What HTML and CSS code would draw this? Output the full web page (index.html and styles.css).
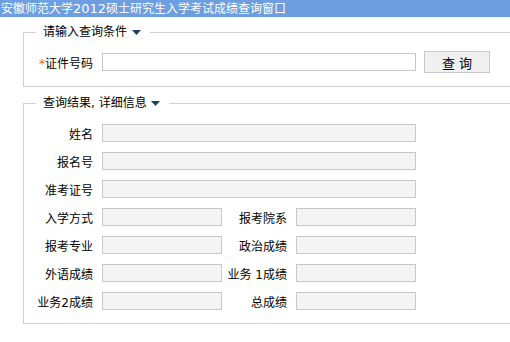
FILE: index.html
```html
<!DOCTYPE html>
<html lang="zh-CN">
<head>
    <meta charset="UTF-8">
    <title>安徽师范大学2012硕士研究生入学考试成绩查询窗口</title>
    <link rel="stylesheet" href="styles.css">
</head>
<body>
    <div class="title">安徽师范大学<span class="num">2012</span>硕士研究生入学考试成绩查询窗口</div>

    <div class="wrap">
        <fieldset class="query">
            <legend>请输入查询条件 <svg class="arrow" width="9" height="5" viewBox="0 0 9 5"><polygon points="0,0 9,0 4.5,5" /></svg></legend>
            <div class="row">
                <label class="lbl"><span class="req">*</span>证件号码</label>
                <input type="text" class="txt long white">
                <button class="btn">查 询</button>
            </div>
        </fieldset>

        <fieldset class="result">
            <legend>查询结果, 详细信息 <svg class="arrow" width="9" height="5" viewBox="0 0 9 5"><polygon points="0,0 9,0 4.5,5" /></svg></legend>
            <div class="row">
                <label class="lbl">姓名</label>
                <input type="text" class="txt long" readonly>
            </div>
            <div class="row">
                <label class="lbl">报名号</label>
                <input type="text" class="txt long" readonly>
            </div>
            <div class="row">
                <label class="lbl">准考证号</label>
                <input type="text" class="txt long" readonly>
            </div>
            <div class="row">
                <label class="lbl">入学方式</label>
                <input type="text" class="txt short" readonly>
                <label class="lbl2">报考院系</label>
                <input type="text" class="txt short" readonly>
            </div>
            <div class="row">
                <label class="lbl">报考专业</label>
                <input type="text" class="txt short" readonly>
                <label class="lbl2">政治成绩</label>
                <input type="text" class="txt short" readonly>
            </div>
            <div class="row">
                <label class="lbl">外语成绩</label>
                <input type="text" class="txt short" readonly>
                <label class="lbl2">业务 1成绩</label>
                <input type="text" class="txt short" readonly>
            </div>
            <div class="row">
                <label class="lbl">业务2成绩</label>
                <input type="text" class="txt short" readonly>
                <label class="lbl2">总成绩</label>
                <input type="text" class="txt short" readonly>
            </div>
        </fieldset>
    </div>
</body>
</html>
```

FILE: styles.css
```css
body {
    margin: 0;
    font-family: "DejaVu Sans", "Noto Sans CJK SC", sans-serif;
    font-size: 12px;
    color: #000;
    background: #fff;
    overflow: hidden;
}
.title {
    height: 17px;
    line-height: 17px;
    font-size: 12px;
    color: #fff;
    background-color: #6c9ee0;
    padding-left: 1px;
    white-space: nowrap;
}
.title .num {
    font-size: 13px;
}
.wrap {
    overflow: hidden;
}
fieldset {
    box-sizing: border-box;
    width: 540px;
    margin: 0 0 0 23px;
    padding: 0;
    border: 1px solid #d0d0d0;
}
legend {
    margin-left: 12px;
    padding: 0 9px 0 7px;
    line-height: 20px;
    height: 20px;
}
.arrow {
    fill: #1f3d5c;
    margin-left: 1px;
    vertical-align: 1px;
}
.query {
    margin-top: 5px;
    padding: 9px 0 13px;
}
.result {
    margin-top: 6px;
    padding: 11px 0 13px;
}
.row {
    display: flex;
    align-items: center;
}
.query .row {
    height: 22px;
}
.result .row {
    height: 18px;
    margin-bottom: 10px;
}
.result .row:last-child {
    margin-bottom: 0;
}
.lbl {
    width: 69px;
    margin-right: 9px;
    text-align: right;
    white-space: nowrap;
}
.lbl2 {
    width: 65px;
    margin-right: 9px;
    text-align: right;
    white-space: nowrap;
}
.req {
    color: #e07000;
}
.txt {
    box-sizing: border-box;
    height: 18px;
    margin: 0;
    padding: 0 2px;
    border: 1px solid #c8c8c8;
    background-color: #f4f4f4;
    font-size: 12px;
}
.white {
    background-color: #fff;
}
.long {
    width: 314px;
}
.short {
    width: 120px;
}
.btn {
    box-sizing: border-box;
    width: 66px;
    height: 22px;
    margin: 0 0 0 8px;
    padding: 0;
    border: 1px solid #c8c8c8;
    background-color: #f0f0f0;
    font-family: "DejaVu Sans", "Noto Sans CJK SC", sans-serif;
    font-size: 13px;
    color: #000;
}
```
